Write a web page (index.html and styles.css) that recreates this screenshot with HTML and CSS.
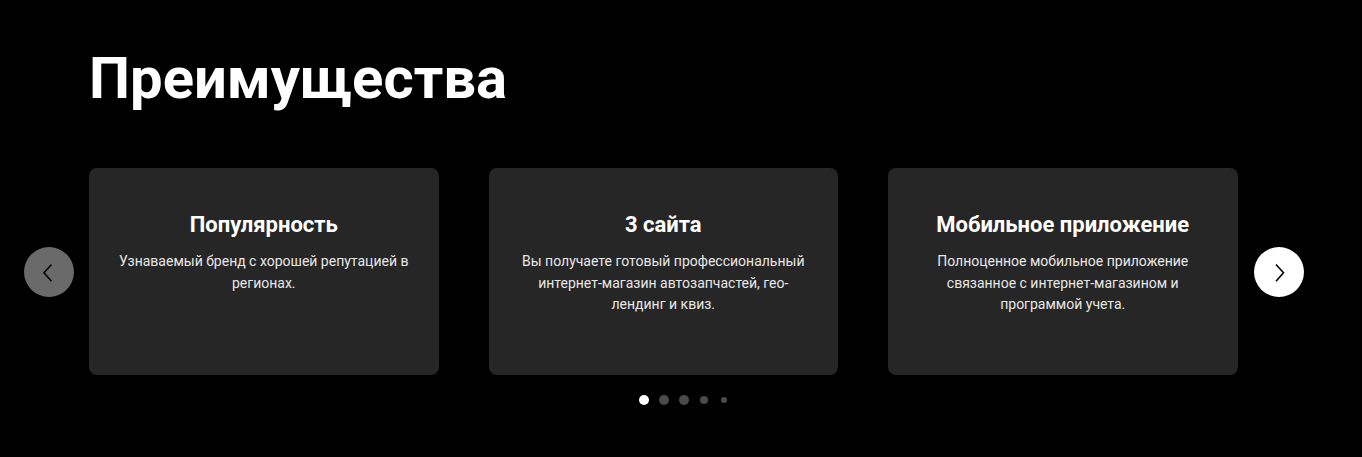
FILE: index.html
```html
<!DOCTYPE html>
<html lang="ru">
<head>
<meta charset="utf-8">
<link rel="stylesheet" href="styles.css">
</head>
<body>
<section class="advantages">
  <h1 class="title">Преимущества</h1>
  <div class="carousel">
    <button class="arrow arrow-prev" aria-label="Назад">
      <svg width="50" height="50" viewBox="0 0 50 50"><path d="M27.5 17.5 L20 25.8 L27.5 34.2" fill="none" stroke="#000" stroke-width="1.6"/></svg>
    </button>
    <div class="cards">
      <div class="card">
        <h3 class="card-title">Популярность</h3>
        <p class="card-text">Узнаваемый бренд с хорошей репутацией в регионах.</p>
      </div>
      <div class="card">
        <h3 class="card-title">3 сайта</h3>
        <p class="card-text">Вы получаете готовый профессиональный интернет-магазин автозапчастей, гео-лендинг и квиз.</p>
      </div>
      <div class="card">
        <h3 class="card-title">Мобильное приложение</h3>
        <p class="card-text">Полноценное мобильное приложение связанное с интернет-магазином и программой учета.</p>
      </div>
    </div>
    <button class="arrow arrow-next" aria-label="Вперёд">
      <svg width="50" height="50" viewBox="0 0 50 50"><path d="M22 17.5 L29.5 25.8 L22 34.2" fill="none" stroke="#000" stroke-width="1.6"/></svg>
    </button>
  </div>
  <div class="dots">
    <span class="dot dot-active"></span>
    <span class="dot"></span>
    <span class="dot"></span>
    <span class="dot dot-small"></span>
    <span class="dot dot-tiny"></span>
  </div>
</section>
</body>
</html>
```

FILE: styles.css
```css
* { box-sizing: border-box; }
html, body {
  margin: 0;
  background: #000;
  color: #fff;
  font-family: Roboto, "Noto Sans", Arial, sans-serif;
}
.advantages {
  padding-top: 43px;
}
.title {
  margin: 0 0 55px 89px;
  font-size: 58px;
  line-height: 70px;
  font-weight: 700;
}
.carousel {
  display: flex;
  align-items: center;
  padding-left: 24px;
}
.arrow {
  width: 50px;
  height: 50px;
  border-radius: 50%;
  border: none;
  padding: 0;
  display: block;
  flex: none;
  cursor: pointer;
}
.arrow svg { display: block; }
.arrow-prev { background: #6a6a6a; }
.arrow-next { background: #fff; }
.cards {
  display: flex;
  gap: 50px;
  margin: 0 16px 0 15px;
}
.card {
  width: 349.5px;
  height: 207px;
  background: #262626;
  border-radius: 8px;
  padding: 43px 24px 0;
  text-align: center;
}
.card-title {
  margin: 0;
  font-size: 22px;
  line-height: 28px;
  font-weight: 700;
}
.card-text {
  margin: 12px 0 0;
  font-size: 14px;
  line-height: 21.5px;
  color: #e6e6e6;
}
.dots {
  display: flex;
  align-items: center;
  justify-content: center;
  gap: 10px;
  margin-top: 20px;
  padding-left: 6px;
  width: 1362px;
}
.dot {
  width: 10px;
  height: 10px;
  border-radius: 50%;
  background: #4a4a4a;
}
.dot-active { background: #fff; }
.dot-small { width: 8px; height: 8px; margin: 0 1px; }
.dot-tiny { width: 6px; height: 6px; margin: 0 2px; }
```
